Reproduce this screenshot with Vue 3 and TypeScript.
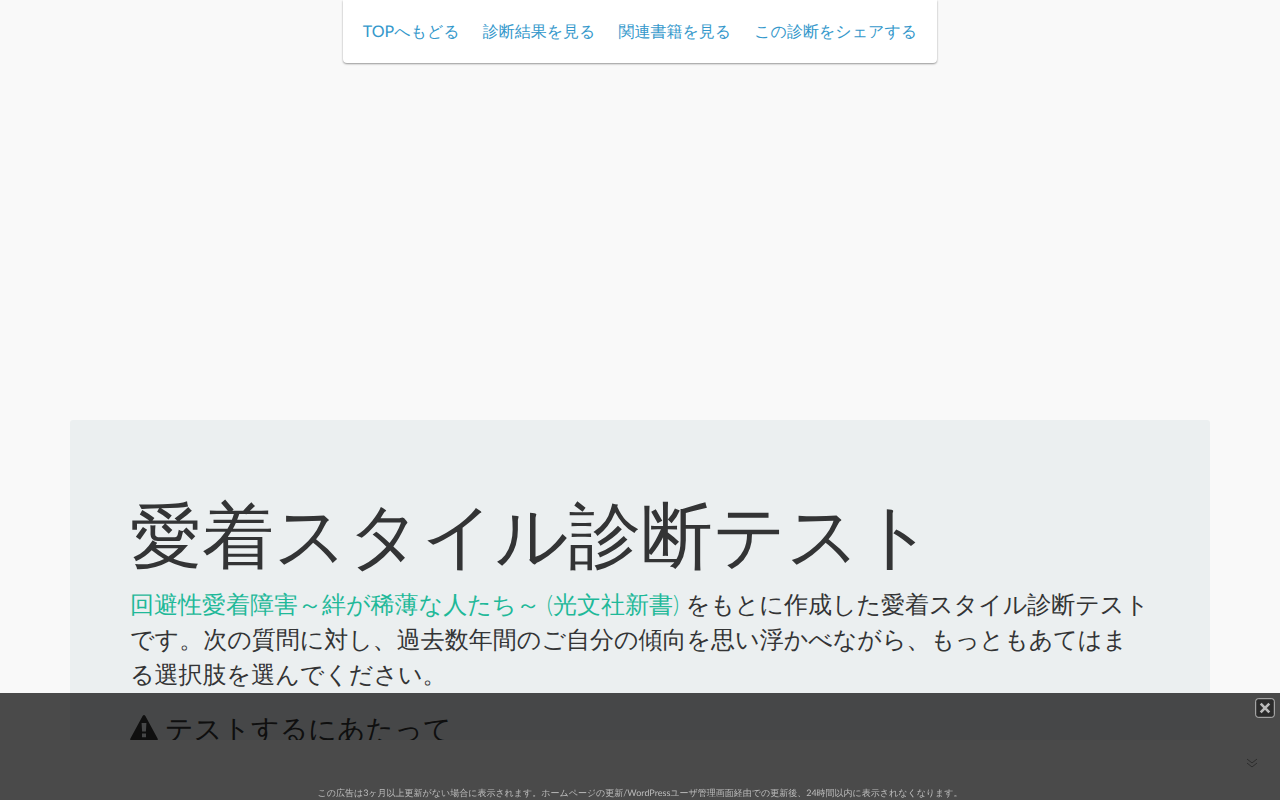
<script setup lang="ts">
interface NavLink {
  label: string
  href: string
}

const links: NavLink[] = [
  { label: 'TOPへもどる', href: '#top' },
  { label: '診断結果を見る', href: '#result' },
  { label: '関連書籍を見る', href: '#books' },
  { label: 'この診断をシェアする', href: '#share' },
]
</script>

<template>
  <div id="top" class="page">
    <nav class="nav">
      <a v-for="link in links" :key="link.href" :href="link.href">{{ link.label }}</a>
    </nav>

    <main class="jumbotron">
      <h1>愛着スタイル診断テスト</h1>
      <p>
        <a href="#books">回避性愛着障害～絆が稀薄な人たち～ (光文社新書)</a>
        をもとに作成した愛着スタイル診断テストです。次の質問に対し、過去数年間のご自分の傾向を思い浮かべながら、もっともあてはまる選択肢を選んでください。
      </p>
      <h2>
        <svg class="warning" viewBox="0 0 28 26" aria-hidden="true">
          <path fill-rule="evenodd" d="M12.6 1Q14 -1 15.4 1L27.6 23.6Q28.4 26 26 26H2Q-0.4 26 0.4 23.6ZM11.6 8L12.1 16.5H15.9L16.4 8ZM12 18.5V22.2H16V18.5Z" />
        </svg>
        テストするにあたって
      </h2>
    </main>

    <aside class="ad">
      <button class="close" type="button" aria-label="閉じる">
        <svg viewBox="0 0 20 20" aria-hidden="true">
          <rect x="0.7" y="0.7" width="18.6" height="18.6" rx="2.5" />
          <path d="M5.7 5.7L14.3 14.3M14.3 5.7L5.7 14.3" />
        </svg>
      </button>
      <svg class="chevrons" viewBox="0 0 12 10" aria-hidden="true">
        <path d="M1 1L6 5L11 1M1 5L6 9L11 5" />
      </svg>
      <small>この広告は3ヶ月以上更新がない場合に表示されます。ホームページの更新/WordPressユーザ管理画面経由での更新後、24時間以内に表示されなくなります。</small>
    </aside>
  </div>
</template>

<style>
body {
  background: #f9f9f9;
}
</style>

<style scoped>
.page {
  box-sizing: border-box;
  height: 100vh;
  padding: 0 70px 60px;
  display: flex;
  flex-direction: column;
  overflow: hidden;
  color: #333435;
  font-family: Lato, sans-serif;
  text-rendering: geometricPrecision;
}

a {
  text-decoration: none;
}

.nav {
  align-self: center;
  flex: none;
  display: flex;
  gap: 23px;
  padding: 20px 20px 19px;
  background: #fff;
  border-radius: 0 0 4px 4px;
  box-shadow: 0 1px 2px rgba(0, 0, 0, 0.4);
  font-size: 16px;
  line-height: 24px;
}

.nav a {
  color: #3498cb;
}

.jumbotron {
  flex: 1;
  min-height: 0;
  margin-top: 357px;
  padding: 74px 60px 0;
  overflow: hidden;
  background: #ebeff0;
  border-radius: 3px 3px 0 0;
}

h1,
h2,
p {
  margin: 0;
  font-weight: 400;
}

h1 {
  font-size: 72px;
  line-height: 80px;
}

p {
  margin-top: 13px;
  font-size: 24px;
  font-weight: 300;
  line-height: 35px;
}

p a {
  color: #1fb999;
}

h2 {
  display: flex;
  align-items: center;
  gap: 7px;
  margin-top: 18px;
  font-size: 28px;
  line-height: 36px;
}

.warning {
  width: 28px;
  height: 26px;
  fill: currentColor;
}

.ad {
  position: fixed;
  right: 0;
  bottom: 0;
  left: 0;
  height: 107px;
  display: flex;
  align-items: flex-end;
  justify-content: center;
  background: rgba(0, 0, 0, 0.7);
  color: #bbb;
}

.ad small {
  font-size: 9px;
  line-height: 14px;
}

.close {
  position: absolute;
  top: 5px;
  right: 5px;
  width: 20px;
  height: 20px;
  padding: 0;
  border: 0;
  background: none;
}

.close svg {
  display: block;
  fill: #2b2b2b;
  stroke: #bbb;
}

.close path {
  stroke-width: 2.6;
}

.chevrons {
  position: absolute;
  right: 22px;
  bottom: 32px;
  width: 12px;
  height: 10px;
  fill: none;
  stroke: #2b2b2b;
}
</style>
